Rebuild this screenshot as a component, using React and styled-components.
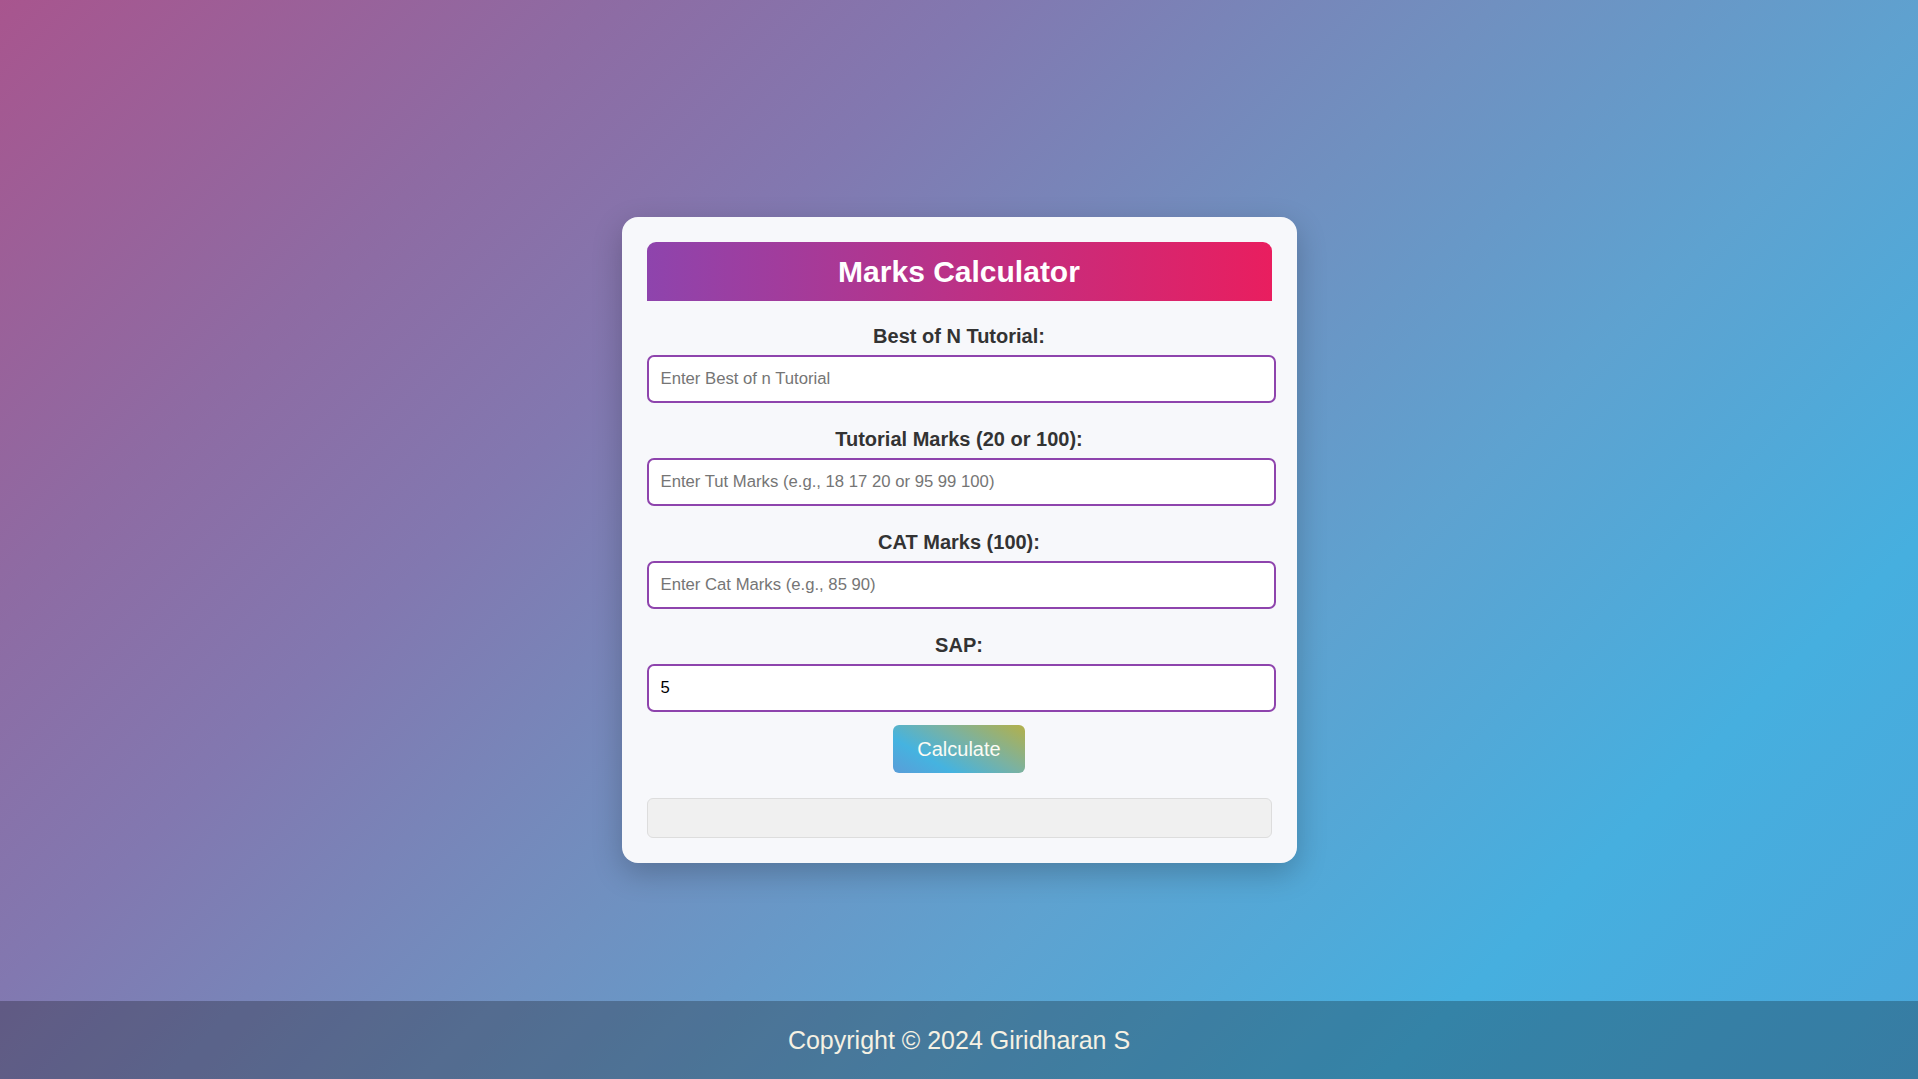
// --------------------------------------------------
//   Import
// --------------------------------------------------

import React, { useState } from 'react';
import styled, { createGlobalStyle } from 'styled-components';



// --------------------------------------------------
//   Styles
// --------------------------------------------------

const GlobalStyle = createGlobalStyle`
  html, body {
    margin: 0;
    padding: 0;
  }

  body {
    font-family: "Liberation Sans", Arial, sans-serif;
    background: linear-gradient(
      135deg,
      #a8558e 0%,
      #8e6ba3 20%,
      #8278b0 33%,
      #7090c0 50%,
      #5ea2d0 65%,
      #46afdf 82%,
      #4aa6da 100%
    );
    min-height: 100vh;
  }
`;

const Page = styled.div`
  min-height: 100vh;
  display: flex;
  flex-direction: column;
`;

const Main = styled.main`
  flex: 1;
  display: flex;
  align-items: center;
  justify-content: center;
  padding-top: 78px;
`;

const Card = styled.div`
  width: 625px;
  padding: 25px;
  background: #f7f8fb;
  border-radius: 16px;
  box-shadow: 0 10px 30px rgba(0, 0, 0, 0.22);
`;

const Header = styled.h1`
  margin: 0 0 24px 0;
  padding: 10px 0;
  font-size: 30px;
  line-height: 39px;
  font-weight: bold;
  text-align: center;
  color: #ffffff;
  background: linear-gradient(90deg, #8e44ad, #e91e5f);
  border-radius: 9px 9px 0 0;
`;

const Field = styled.div`
  display: flex;
  flex-direction: column;
  align-items: flex-start;

  & + & {
    margin-top: 25px;
  }
`;

const Label = styled.label`
  align-self: stretch;
  margin: 0 0 8px 0;
  font-size: 20px;
  line-height: 22px;
  font-weight: bold;
  text-align: center;
  color: #333333;
`;

const Input = styled.input`
  box-sizing: border-box;
  width: 629px;
  height: 48px;
  margin: 0;
  padding: 0 12px;
  font-family: "Liberation Sans", Arial, sans-serif;
  font-size: 16.7px;
  color: #000000;
  background: #ffffff;
  border: 2px solid #8e44ad;
  border-radius: 7px;
  outline: none;

  &::placeholder {
    color: #757575;
  }
`;

const Button = styled.button`
  display: block;
  margin: 13px auto 0 auto;
  padding: 12px 24px;
  font-family: "Liberation Sans", Arial, sans-serif;
  font-size: 20px;
  line-height: 24px;
  color: #fbfbf4;
  border: none;
  border-radius: 6px;
  background: linear-gradient(30deg, #5a9dd8 0%, #45b3e0 28%, #7ab2a2 60%, #b3b04a 100%);
  cursor: pointer;
`;

const Result = styled.div`
  box-sizing: border-box;
  height: 40px;
  margin-top: 25px;
  background: #f0f0f0;
  border: 1px solid #dddddd;
  border-radius: 6px;
`;

const Footer = styled.footer`
  padding: 25px 0;
  font-size: 25px;
  line-height: 28px;
  text-align: center;
  color: #f5f1e3;
  background: rgba(0, 0, 0, 0.25);
`;



// --------------------------------------------------
//   Data
// --------------------------------------------------

const fields = [
  { id: 'bestOfN', label: 'Best of N Tutorial:', placeholder: 'Enter Best of n Tutorial' },
  { id: 'tutMarks', label: 'Tutorial Marks (20 or 100):', placeholder: 'Enter Tut Marks (e.g., 18 17 20 or 95 99 100)' },
  { id: 'catMarks', label: 'CAT Marks (100):', placeholder: 'Enter Cat Marks (e.g., 85 90)' },
  { id: 'sap', label: 'SAP:', placeholder: 'Enter SAP', value: '5' },
];



// --------------------------------------------------
//   Component
// --------------------------------------------------

export default function App() {

  const [result] = useState('');

  return (
    <React.Fragment>
      <GlobalStyle />

      <Page>
        <Main>
          <Card>
            <Header>Marks Calculator</Header>

            {fields.map((field) => (
              <Field key={field.id}>
                <Label htmlFor={field.id}>{field.label}</Label>
                <Input
                  id={field.id}
                  type="text"
                  placeholder={field.placeholder}
                  defaultValue={field.value}
                />
              </Field>
            ))}

            <Button type="button">Calculate</Button>

            <Result>{result}</Result>
          </Card>
        </Main>

        <Footer>Copyright © 2024 Giridharan S</Footer>
      </Page>
    </React.Fragment>
  );

}
